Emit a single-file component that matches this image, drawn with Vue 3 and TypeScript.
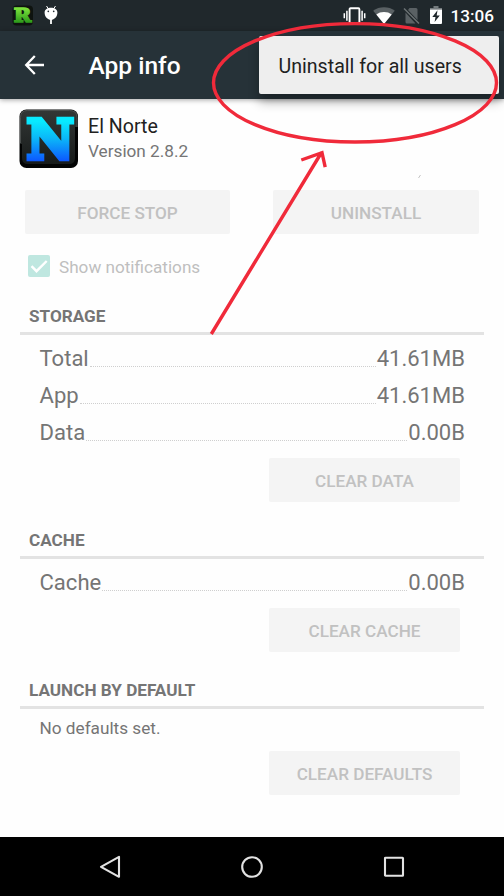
<script setup lang="ts">
interface Row {
  label: string
  value: string
}
interface Section {
  id: string
  title: string
  rows: Row[]
  note?: string
  action: string
}

const sections: Section[] = [
  {
    id: 'storage',
    title: 'STORAGE',
    rows: [
      { label: 'Total', value: '41.61MB' },
      { label: 'App', value: '41.61MB' },
      { label: 'Data', value: '0.00B' },
    ],
    action: 'CLEAR DATA',
  },
  {
    id: 'cache',
    title: 'CACHE',
    rows: [{ label: 'Cache', value: '0.00B' }],
    action: 'CLEAR CACHE',
  },
  {
    id: 'defaults',
    title: 'LAUNCH BY DEFAULT',
    rows: [],
    note: 'No defaults set.',
    action: 'CLEAR DEFAULTS',
  },
]
</script>

<template>
  <div class="screen">
    <header class="status">
      <svg class="r-icon" width="22" height="22" viewBox="0 0 22 22">
        <defs>
          <linearGradient id="green" x1="0" y1="0" x2="0" y2="1">
            <stop offset="0.200" stop-color="#7be03c" />
            <stop offset="0.800" stop-color="#2f9c1c" />
          </linearGradient>
        </defs>
        <rect x="0.500" y="0.500" width="20.500" height="20" rx="4" fill="#0e130f" />
        <text class="slab" x="1.800" y="17.200" font-size="19" textLength="17.500" lengthAdjust="spacingAndGlyphs" fill="url(#green)" stroke="url(#green)" stroke-width="1.600">R</text>
      </svg>
      <svg class="bug-icon" width="16" height="20" viewBox="0 0 16 20">
        <path d="M3.500 1l2 3M12.500 1l-2 3" stroke="#fff" stroke-width="1" />
        <path d="M1.600 7.500C1.600 4.600 4.400 2.800 8 2.800s6.400 1.800 6.400 4.700c0 4.300-3 7.300-6.400 7.300s-6.400-3-6.400-7.300z" fill="#fff" />
        <path d="M8 14v5" stroke="#fff" stroke-width="1.800" />
        <circle cx="5.300" cy="6.300" r="0.850" fill="#273035" />
        <circle cx="10.700" cy="6.300" r="0.850" fill="#273035" />
      </svg>
      <div class="tray">
        <svg width="23" height="18" viewBox="0 0 23 18" fill="none" stroke="#fff">
          <rect x="6.600" y="1.200" width="9.800" height="15" rx="1" stroke-width="1.900" />
          <path d="M3.900 3.800v10M19.100 3.800v10" stroke-width="1.500" />
          <path d="M1.300 6.300v5M21.700 6.300v5" stroke-width="1.500" />
        </svg>
        <svg class="wifi" width="22" height="17" viewBox="0 0 22 17">
          <path d="M11 17L.2 3.700C3.200 1.300 7 .2 11 .2s7.800 1.100 10.800 3.500z" fill="#5a6164" />
          <path d="M11 17L3.300 7.400C5.500 5.700 8 4.900 11 4.900s5.500 .8 7.700 2.500z" fill="#fff" />
        </svg>
        <svg class="sim" width="17" height="18" viewBox="0 0 17 18">
          <path d="M6.500 1H13q1.500 0 1.500 1.500V13L5 3zM2.500 5.600L12.500 16.500H4q-1.500 0-1.500-1.500z" fill="#5a6164" />
          <path d="M1 1.500l15 15" stroke="#6b7275" stroke-width="1.400" />
        </svg>
        <svg class="battery" width="12" height="18" viewBox="0 0 12 18">
          <path d="M3.500 0h5v2H12v1.500H0V2h3.500z" fill="#747b7e" />
          <path d="M0 3.500h12V17q0 1-1 1H1q-1 0-1-1z" fill="#fff" />
          <path d="M7.500 4.300L2.300 11h3.200L4.600 16 9.800 9.400H6.700z" fill="#20272b" />
        </svg>
        <span class="clock">13:06</span>
      </div>
    </header>

    <nav class="appbar">
      <svg width="22" height="22" viewBox="0 0 22 22" fill="none" stroke="#fff" stroke-width="2.300">
        <path d="M10.800 2L2.200 11l8.600 9M2.300 11H20" />
      </svg>
      <h1>App info</h1>
    </nav>

    <main>
      <div class="app">
        <svg width="60" height="60" viewBox="0 0 60 60">
          <defs>
            <linearGradient id="blue" gradientUnits="userSpaceOnUse" x1="0" y1="8" x2="0" y2="52">
              <stop offset="0.100" stop-color="#08eaff" />
              <stop offset="0.500" stop-color="#0bb5f8" />
              <stop offset="1" stop-color="#0c58ff" />
            </linearGradient>
            <linearGradient id="tile" x1="0" y1="0" x2="0" y2="1">
              <stop offset="0" stop-color="#333736" />
              <stop offset="1" stop-color="#171b1a" />
            </linearGradient>
          </defs>
          <rect x="0.500" y="0.500" width="58.500" height="58.500" rx="7" fill="#030404" />
          <path d="M1 35V8q0-7 7-7h43.500q7 0 7 7v10H56v31q0 6-6 6H9q-6 0-6-6V35z" fill="url(#tile)" />
          <path d="M1.500 34V8.500q0-7 7-7h42q7.500 0 7.500 7V18" fill="none" stroke="#4b4f4e" stroke-width="1" />
          <text class="slab" x="7.500" y="49.500" font-size="53.500" textLength="47.500" lengthAdjust="spacingAndGlyphs" fill="url(#blue)" stroke="url(#blue)" stroke-width="4.600">N</text>
        </svg>
        <div class="app-text">
          <div class="name">El Norte</div>
          <div class="version">Version 2.8.2</div>
        </div>
      </div>

      <div class="actions">
        <button disabled>FORCE STOP</button>
        <button disabled>UNINSTALL</button>
      </div>

      <label class="notify">
        <svg width="22" height="22" viewBox="0 0 22 22">
          <rect width="22" height="22" rx="2" fill="#bfe7e0" />
          <path d="M3.500 11.200l5 5L18.700 6" fill="none" stroke="#fff" stroke-width="2.400" />
        </svg>
        <span>Show notifications</span>
      </label>

      <section v-for="s in sections" :key="s.id" :class="s.id">
        <h2>{{ s.title }}</h2>
        <div v-for="r in s.rows" :key="r.label" class="row">
          <span>{{ r.label }}</span><i class="leader"></i><span>{{ r.value }}</span>
        </div>
        <p v-if="s.note">{{ s.note }}</p>
        <button disabled>{{ s.action }}</button>
      </section>
    </main>

    <footer>
      <svg width="24" height="24" viewBox="0 0 24 24"><path d="M21 1.800v20L3 11.800z" /></svg>
      <svg width="24" height="24" viewBox="0 0 24 24"><circle cx="12" cy="12" r="9.800" /></svg>
      <svg width="24" height="24" viewBox="0 0 24 24"><rect x="3" y="2.700" width="18" height="18" rx="0.500" /></svg>
    </footer>

    <div class="menu">Uninstall for all users</div>

    <svg class="marks" width="504" height="896" viewBox="0 0 504 896">
      <path d="M420.500 175l-2 3" stroke="#aaa" stroke-width="0.700" />
      <g fill="none" stroke="#f02a3a" stroke-width="3.400">
        <ellipse cx="355" cy="82.800" rx="141.500" ry="59.200" />
        <path d="M211.300 334L321.500 152.500M301.300 160L322 152.700l3.200 14.500" />
      </g>
    </svg>
  </div>
</template>

<style>
body {
  margin: 0;
}
</style>

<style scoped>
.screen {
  position: relative;
  width: 504px;
  height: 896px;
  overflow: hidden;
  display: flex;
  flex-direction: column;
  background: #fefefe;
  font-family: Roboto, sans-serif;
  color: #757575;
}
svg {
  display: block;
  flex: none;
  overflow: visible;
}
.status {
  height: 31px;
  background: #20282c;
  display: flex;
  align-items: flex-start;
  box-sizing: border-box;
  padding: 5px 10px 0 12px;
}
.slab {
  font-family: "DejaVu Serif", serif;
  font-weight: 700;
}
.bug-icon {
  margin-left: 9px;
}
.tray {
  margin-left: auto;
  display: flex;
  align-items: flex-start;
  padding-top: 2px;
}
.wifi {
  margin-left: 7px;
}
.sim {
  margin-left: 8px;
}
.battery {
  margin-left: 10px;
  margin-top: -1px;
}
.clock {
  margin-left: 9px;
  font-size: 17.15px;
  line-height: 20px;
  font-weight: 500;
  color: #fff;
  margin-top: -1px;
}
.appbar {
  height: 68px;
  background: #263238;
  box-shadow: 0 1px 5px rgba(0, 0, 0, 0.35);
  display: flex;
  align-items: center;
  padding-left: 24px;
}
h1 {
  margin: 2px 0 0 42.5px;
  font-size: 24.5px;
  font-weight: 500;
  line-height: 30px;
  color: #fff;
}
main {
  flex: 1;
  padding: 0 20px;
}
.app {
  display: flex;
  padding-top: 10px;
  margin-left: -1px;
  height: 60px;
}
.app-text {
  margin-left: 9px;
}
.name {
  margin-top: 6px;
  font-size: 19.6px;
  line-height: 24px;
  color: #212121;
}
.version {
  font-size: 17.2px;
  line-height: 24px;
}
.actions {
  display: grid;
  grid-template-columns: 205px 206px;
  column-gap: 43px;
  padding: 21px 0 0 5px;
}
button {
  height: 44px;
  border: 0;
  border-radius: 2px;
  padding: 2px 0 0;
  background: #f4f4f4;
  color: #c1c1c1;
  font: 500 17.15px/42px Roboto, sans-serif;
}
.notify {
  display: flex;
  align-items: center;
  gap: 9px;
  height: 22px;
  margin: 21px 0 0 8px;
  font-size: 17.15px;
  color: #bfbfbf;
}
.notify span {
  padding-top: 2px;
}
section {
  display: flex;
  flex-direction: column;
}
.storage {
  margin-top: 28px;
}
.cache,
.defaults {
  margin-top: 27px;
}
h2 {
  margin: 0 0 4px;
  padding: 1px 9px 5px;
  border-bottom: 3px solid #e3e3e3;
  font-size: 17.15px;
  line-height: 21px;
  height: 21px;
  font-weight: 700;
}
.row {
  height: 37px;
  box-sizing: border-box;
  padding: 2px 19px 0 19.5px;
  display: flex;
  align-items: center;
  font-size: 22.05px;
}
.leader {
  flex: 1;
  height: 16px;
  border-bottom: 1px dotted #cfcfcf;
  margin: 0 1px;
}
section button {
  width: 191px;
  align-self: flex-end;
  margin: 8px 24px 0 0;
}
.defaults button {
  margin-top: 7px;
}
p {
  margin: 4px 19.5px 5px;
  font-size: 17.2px;
  line-height: 22px;
}
footer {
  height: 59px;
  background: #000;
  display: flex;
  justify-content: center;
  align-items: center;
  gap: 118px;
}
footer svg {
  fill: none;
  stroke: #e2e2e2;
  stroke-width: 2.1;
  stroke-linejoin: round;
}
.menu {
  position: absolute;
  left: 259px;
  top: 36px;
  width: 240px;
  height: 58px;
  box-sizing: border-box;
  padding-left: 19.5px;
  border-radius: 2px;
  background: #eee;
  box-shadow: 0 8px 11px rgba(0, 0, 0, 0.3);
  color: #212121;
  font-size: 19.6px;
  line-height: 61px;
}
.marks {
  position: absolute;
  left: 0;
  top: 0;
  pointer-events: none;
}
</style>
